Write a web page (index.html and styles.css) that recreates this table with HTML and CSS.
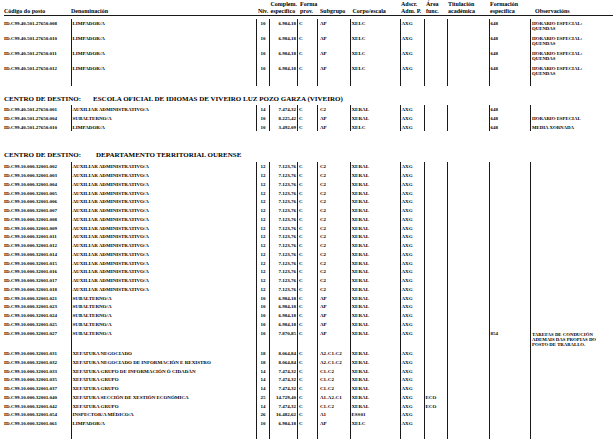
FILE: index.html
```html
<!DOCTYPE html>
<html lang="gl">
<head>
<meta charset="utf-8">
<title>RPT</title>
<link rel="stylesheet" href="styles.css">
</head>
<body>
<div class="page">
  <div class="row head">
    <div class="c">Código do posto</div>
    <div class="c">Denominación</div>
    <div class="c hniv">Niv.</div>
    <div class="c hcomp">Complem.<br>específico</div>
    <div class="c hforma">Forma<br>prov.</div>
    <div class="c hsub">Subgrupo</div>
    <div class="c hcorpo">Corpo/escala</div>
    <div class="c hads">Adscr.<br>Adm. P.</div>
    <div class="c harea">Área<br>func.</div>
    <div class="c htit">Titulación<br>académica</div>
    <div class="c hform">Formación<br>específica</div>
    <div class="c hobs">Observacións</div>
  </div>

  <div class="group g1">
    <div class="row tall2"><div class="c">ID.C99.40.501.27650.008</div><div class="c den">LIMPADOR/A</div><div class="c niv">10</div><div class="c comp">6.984,18</div><div class="c fp">C</div><div class="c sub">AP</div><div class="c t">XELC</div><div class="c t">AXG</div><div class="c t"></div><div class="c t"></div><div class="c t">648</div><div class="c obs">HORARIO ESPECIAL:<br>QUENDAS</div></div>
    <div class="row tall2"><div class="c">ID.C99.40.501.27650.010</div><div class="c den">LIMPADOR/A</div><div class="c niv">10</div><div class="c comp">6.984,18</div><div class="c fp">C</div><div class="c sub">AP</div><div class="c t">XELC</div><div class="c t">AXG</div><div class="c t"></div><div class="c t"></div><div class="c t">648</div><div class="c obs">HORARIO ESPECIAL:<br>QUENDAS</div></div>
    <div class="row tall2"><div class="c">ID.C99.40.501.27650.011</div><div class="c den">LIMPADOR/A</div><div class="c niv">10</div><div class="c comp">6.984,18</div><div class="c fp">C</div><div class="c sub">AP</div><div class="c t">XELC</div><div class="c t">AXG</div><div class="c t"></div><div class="c t"></div><div class="c t">648</div><div class="c obs">HORARIO ESPECIAL:<br>QUENDAS</div></div>
    <div class="row tall2"><div class="c">ID.C99.40.501.27650.012</div><div class="c den">LIMPADOR/A</div><div class="c niv">10</div><div class="c comp">6.984,18</div><div class="c fp">C</div><div class="c sub">AP</div><div class="c t">XELC</div><div class="c t">AXG</div><div class="c t"></div><div class="c t"></div><div class="c t">648</div><div class="c obs">HORARIO ESPECIAL:<br>QUENDAS</div></div>
    <div class="row spacer1"></div>
  </div>

  <h2 class="center h-a"><span class="lbl">CENTRO DE DESTINO:</span>ESCOLA OFICIAL DE IDIOMAS DE VIVEIRO LUZ POZO GARZA (VIVEIRO)</h2>

  <div class="group">
    <div class="row"><div class="c">ID.C99.40.501.27650.001</div><div class="c den">AUXILIAR ADMINISTRATIVO/A</div><div class="c niv">14</div><div class="c comp">7.474,32</div><div class="c fp">C</div><div class="c sub">C2</div><div class="c t">XERAL</div><div class="c t">AXG</div><div class="c t"></div><div class="c t"></div><div class="c t">648</div><div class="c obs"></div></div>
    <div class="row"><div class="c">ID.C99.40.501.27650.004</div><div class="c den">SUBALTERNO/A</div><div class="c niv">10</div><div class="c comp">8.225,42</div><div class="c fp">C</div><div class="c sub">AP</div><div class="c t">XERAL</div><div class="c t">AXG</div><div class="c t"></div><div class="c t"></div><div class="c t">648</div><div class="c obs">HORARIO ESPECIAL</div></div>
    <div class="row"><div class="c">ID.C99.40.501.27650.010</div><div class="c den">LIMPADOR/A</div><div class="c niv">10</div><div class="c comp">3.492,09</div><div class="c fp">C</div><div class="c sub">AP</div><div class="c t">XELC</div><div class="c t">AXG</div><div class="c t"></div><div class="c t"></div><div class="c t">648</div><div class="c obs">MEDIA XORNADA</div></div>
  </div>

  <h2 class="center h-b"><span class="lbl lbl-b">CENTRO DE DESTINO:</span>DEPARTAMENTO TERRITORIAL OURENSE</h2>

  <div class="group g3">
    <div class="row"><div class="c">ID.C99.10.000.32001.002</div><div class="c den">AUXILIAR ADMINISTRATIVO/A</div><div class="c niv">12</div><div class="c comp">7.123,76</div><div class="c fp">C</div><div class="c sub">C2</div><div class="c t">XERAL</div><div class="c t">AXG</div><div class="c t"></div><div class="c t"></div><div class="c t"></div><div class="c obs"></div></div>
    <div class="row"><div class="c">ID.C99.10.000.32001.003</div><div class="c den">AUXILIAR ADMINISTRATIVO/A</div><div class="c niv">12</div><div class="c comp">7.123,76</div><div class="c fp">C</div><div class="c sub">C2</div><div class="c t">XERAL</div><div class="c t">AXG</div><div class="c t"></div><div class="c t"></div><div class="c t"></div><div class="c obs"></div></div>
    <div class="row"><div class="c">ID.C99.10.000.32001.004</div><div class="c den">AUXILIAR ADMINISTRATIVO/A</div><div class="c niv">12</div><div class="c comp">7.123,76</div><div class="c fp">C</div><div class="c sub">C2</div><div class="c t">XERAL</div><div class="c t">AXG</div><div class="c t"></div><div class="c t"></div><div class="c t"></div><div class="c obs"></div></div>
    <div class="row"><div class="c">ID.C99.10.000.32001.005</div><div class="c den">AUXILIAR ADMINISTRATIVO/A</div><div class="c niv">12</div><div class="c comp">7.123,76</div><div class="c fp">C</div><div class="c sub">C2</div><div class="c t">XERAL</div><div class="c t">AXG</div><div class="c t"></div><div class="c t"></div><div class="c t"></div><div class="c obs"></div></div>
    <div class="row"><div class="c">ID.C99.10.000.32001.006</div><div class="c den">AUXILIAR ADMINISTRATIVO/A</div><div class="c niv">12</div><div class="c comp">7.123,76</div><div class="c fp">C</div><div class="c sub">C2</div><div class="c t">XERAL</div><div class="c t">AXG</div><div class="c t"></div><div class="c t"></div><div class="c t"></div><div class="c obs"></div></div>
    <div class="row"><div class="c">ID.C99.10.000.32001.007</div><div class="c den">AUXILIAR ADMINISTRATIVO/A</div><div class="c niv">12</div><div class="c comp">7.123,76</div><div class="c fp">C</div><div class="c sub">C2</div><div class="c t">XERAL</div><div class="c t">AXG</div><div class="c t"></div><div class="c t"></div><div class="c t"></div><div class="c obs"></div></div>
    <div class="row"><div class="c">ID.C99.10.000.32001.008</div><div class="c den">AUXILIAR ADMINISTRATIVO/A</div><div class="c niv">12</div><div class="c comp">7.123,76</div><div class="c fp">C</div><div class="c sub">C2</div><div class="c t">XERAL</div><div class="c t">AXG</div><div class="c t"></div><div class="c t"></div><div class="c t"></div><div class="c obs"></div></div>
    <div class="row"><div class="c">ID.C99.10.000.32001.009</div><div class="c den">AUXILIAR ADMINISTRATIVO/A</div><div class="c niv">12</div><div class="c comp">7.123,76</div><div class="c fp">C</div><div class="c sub">C2</div><div class="c t">XERAL</div><div class="c t">AXG</div><div class="c t"></div><div class="c t"></div><div class="c t"></div><div class="c obs"></div></div>
    <div class="row"><div class="c">ID.C99.10.000.32001.011</div><div class="c den">AUXILIAR ADMINISTRATIVO/A</div><div class="c niv">12</div><div class="c comp">7.123,76</div><div class="c fp">C</div><div class="c sub">C2</div><div class="c t">XERAL</div><div class="c t">AXG</div><div class="c t"></div><div class="c t"></div><div class="c t"></div><div class="c obs"></div></div>
    <div class="row"><div class="c">ID.C99.10.000.32001.012</div><div class="c den">AUXILIAR ADMINISTRATIVO/A</div><div class="c niv">12</div><div class="c comp">7.123,76</div><div class="c fp">C</div><div class="c sub">C2</div><div class="c t">XERAL</div><div class="c t">AXG</div><div class="c t"></div><div class="c t"></div><div class="c t"></div><div class="c obs"></div></div>
    <div class="row"><div class="c">ID.C99.10.000.32001.014</div><div class="c den">AUXILIAR ADMINISTRATIVO/A</div><div class="c niv">12</div><div class="c comp">7.123,76</div><div class="c fp">C</div><div class="c sub">C2</div><div class="c t">XERAL</div><div class="c t">AXG</div><div class="c t"></div><div class="c t"></div><div class="c t"></div><div class="c obs"></div></div>
    <div class="row"><div class="c">ID.C99.10.000.32001.015</div><div class="c den">AUXILIAR ADMINISTRATIVO/A</div><div class="c niv">12</div><div class="c comp">7.123,76</div><div class="c fp">C</div><div class="c sub">C2</div><div class="c t">XERAL</div><div class="c t">AXG</div><div class="c t"></div><div class="c t"></div><div class="c t"></div><div class="c obs"></div></div>
    <div class="row"><div class="c">ID.C99.10.000.32001.016</div><div class="c den">AUXILIAR ADMINISTRATIVO/A</div><div class="c niv">12</div><div class="c comp">7.123,76</div><div class="c fp">C</div><div class="c sub">C2</div><div class="c t">XERAL</div><div class="c t">AXG</div><div class="c t"></div><div class="c t"></div><div class="c t"></div><div class="c obs"></div></div>
    <div class="row"><div class="c">ID.C99.10.000.32001.017</div><div class="c den">AUXILIAR ADMINISTRATIVO/A</div><div class="c niv">12</div><div class="c comp">7.123,76</div><div class="c fp">C</div><div class="c sub">C2</div><div class="c t">XERAL</div><div class="c t">AXG</div><div class="c t"></div><div class="c t"></div><div class="c t"></div><div class="c obs"></div></div>
    <div class="row"><div class="c">ID.C99.10.000.32001.018</div><div class="c den">AUXILIAR ADMINISTRATIVO/A</div><div class="c niv">12</div><div class="c comp">7.123,76</div><div class="c fp">C</div><div class="c sub">C2</div><div class="c t">XERAL</div><div class="c t">AXG</div><div class="c t"></div><div class="c t"></div><div class="c t"></div><div class="c obs"></div></div>
    <div class="row"><div class="c">ID.C99.10.000.32001.021</div><div class="c den">SUBALTERNO/A</div><div class="c niv">10</div><div class="c comp">6.984,18</div><div class="c fp">C</div><div class="c sub">AP</div><div class="c t">XERAL</div><div class="c t">AXG</div><div class="c t"></div><div class="c t"></div><div class="c t"></div><div class="c obs"></div></div>
    <div class="row"><div class="c">ID.C99.10.000.32001.023</div><div class="c den">SUBALTERNO/A</div><div class="c niv">10</div><div class="c comp">6.984,18</div><div class="c fp">C</div><div class="c sub">AP</div><div class="c t">XERAL</div><div class="c t">AXG</div><div class="c t"></div><div class="c t"></div><div class="c t"></div><div class="c obs"></div></div>
    <div class="row"><div class="c">ID.C99.10.000.32001.024</div><div class="c den">SUBALTERNO/A</div><div class="c niv">10</div><div class="c comp">6.984,18</div><div class="c fp">C</div><div class="c sub">AP</div><div class="c t">XERAL</div><div class="c t">AXG</div><div class="c t"></div><div class="c t"></div><div class="c t"></div><div class="c obs"></div></div>
    <div class="row"><div class="c">ID.C99.10.000.32001.025</div><div class="c den">SUBALTERNO/A</div><div class="c niv">10</div><div class="c comp">6.984,18</div><div class="c fp">C</div><div class="c sub">AP</div><div class="c t">XERAL</div><div class="c t">AXG</div><div class="c t"></div><div class="c t"></div><div class="c t"></div><div class="c obs"></div></div>
    <div class="row tall3"><div class="c">ID.C99.10.000.32001.027</div><div class="c den">SUBALTERNO/A</div><div class="c niv">10</div><div class="c comp">7.870,85</div><div class="c fp">C</div><div class="c sub">AP</div><div class="c t">XERAL</div><div class="c t">AXG</div><div class="c t"></div><div class="c t"></div><div class="c t">854</div><div class="c obs obs3">TAREFAS DE CONDUCIÓN<br>ADEMAIS DAS PROPIAS DO<br>POSTO DE TRABALLO.</div></div>
    <div class="row"><div class="c">ID.C99.10.000.32001.031</div><div class="c den">XEFATURA NEGOCIADO</div><div class="c niv">18</div><div class="c comp">8.064,84</div><div class="c fp">C</div><div class="c sub">A2-C1-C2</div><div class="c t">XERAL</div><div class="c t">AXG</div><div class="c t"></div><div class="c t"></div><div class="c t"></div><div class="c obs"></div></div>
    <div class="row"><div class="c">ID.C99.10.000.32001.032</div><div class="c den">XEFATURA NEGOCIADO DE INFORMACIÓN E REXISTRO</div><div class="c niv">18</div><div class="c comp">8.064,84</div><div class="c fp">C</div><div class="c sub">A2-C1-C2</div><div class="c t">XERAL</div><div class="c t">AXG</div><div class="c t"></div><div class="c t"></div><div class="c t"></div><div class="c obs"></div></div>
    <div class="row"><div class="c">ID.C99.10.000.32001.033</div><div class="c den">XEFATURA GRUPO DE INFORMACIÓN Ó CIDADÁN</div><div class="c niv">14</div><div class="c comp">7.474,32</div><div class="c fp">C</div><div class="c sub">C1-C2</div><div class="c t">XERAL</div><div class="c t">AXG</div><div class="c t"></div><div class="c t"></div><div class="c t"></div><div class="c obs"></div></div>
    <div class="row"><div class="c">ID.C99.10.000.32001.035</div><div class="c den">XEFATURA GRUPO</div><div class="c niv">14</div><div class="c comp">7.474,32</div><div class="c fp">C</div><div class="c sub">C1-C2</div><div class="c t">XERAL</div><div class="c t">AXG</div><div class="c t"></div><div class="c t"></div><div class="c t"></div><div class="c obs"></div></div>
    <div class="row"><div class="c">ID.C99.10.000.32001.037</div><div class="c den">XEFATURA GRUPO</div><div class="c niv">14</div><div class="c comp">7.474,32</div><div class="c fp">C</div><div class="c sub">C1-C2</div><div class="c t">XERAL</div><div class="c t">AXG</div><div class="c t"></div><div class="c t"></div><div class="c t"></div><div class="c obs"></div></div>
    <div class="row"><div class="c">ID.C99.10.000.32001.040</div><div class="c den">XEFATURA SECCIÓN DE XESTIÓN ECONÓMICA</div><div class="c niv">25</div><div class="c comp">14.729,40</div><div class="c fp">C</div><div class="c sub">A1-A2-C1</div><div class="c t">XERAL</div><div class="c t">AXG</div><div class="c t">ECO</div><div class="c t"></div><div class="c t"></div><div class="c obs"></div></div>
    <div class="row"><div class="c">ID.C99.10.000.32001.042</div><div class="c den">XEFATURA GRUPO</div><div class="c niv">14</div><div class="c comp">7.474,32</div><div class="c fp">C</div><div class="c sub">C1-C2</div><div class="c t">XERAL</div><div class="c t">AXG</div><div class="c t">ECO</div><div class="c t"></div><div class="c t"></div><div class="c obs"></div></div>
    <div class="row"><div class="c">ID.C99.10.000.32001.054</div><div class="c den">INSPECTOR/A MÉDICO/A</div><div class="c niv">26</div><div class="c comp">16.482,62</div><div class="c fp">C</div><div class="c sub">A1</div><div class="c t">ESS01</div><div class="c t">AXG</div><div class="c t"></div><div class="c t"></div><div class="c t"></div><div class="c obs"></div></div>
    <div class="row"><div class="c">ID.C99.10.000.32001.061</div><div class="c den">LIMPADOR/A</div><div class="c niv">10</div><div class="c comp">6.984,18</div><div class="c fp">C</div><div class="c sub">AP</div><div class="c t">XELC</div><div class="c t">AXG</div><div class="c t"></div><div class="c t"></div><div class="c t"></div><div class="c obs"></div></div>
    <div class="row spacer3"></div>
  </div>
</div>
</body>
</html>
```

FILE: styles.css
```css
html, body {
  margin: 0;
  padding: 0;
  background: #fff;
}

body {
  font-family: "Liberation Serif", "Times New Roman", serif;
  font-weight: bold;
  color: #000;
  overflow: hidden;
}

.page {
  padding: 0 2px 0 4px;
}

/* vertical column rules drawn on each group block */
.group {
  --rule: linear-gradient(#1a1a1a, #1a1a1a);
  background-image: var(--rule), var(--rule), var(--rule), var(--rule), var(--rule), var(--rule),
                    var(--rule), var(--rule), var(--rule), var(--rule), var(--rule);
  background-size: 1px 100%;
  background-repeat: no-repeat;
  background-position: 67px 0, 252px 0, 265px 0, 293px 0, 313px 0, 346px 0,
                       396px 0, 420px 0, 443px 0, 485px 0, 526px 0;
}

.row {
  display: grid;
  grid-template-columns: 67px 185px 13px 28px 20px 33px 50px 24px 23px 42px 41px 1fr;
  height: 8.75px;
  font-size: 5px;
  line-height: 5px;
  white-space: nowrap;
}

.g1 .row.tall2 { height: 15px; }
.g3 .row.tall3 { height: 20.5px; }
.row.spacer1 { height: 7px; }
.row.spacer3 { height: 14px; }

.c {
  padding-top: 2px;
}

.den { padding-left: 1.5px; }
.niv { text-align: center; padding-left: 1px; }
.comp { text-align: right; padding-right: 1px; }
.fp { padding-left: 2px; }
.sub { padding-left: 3px; }
.t { padding-left: 1.5px; }
.obs { padding-left: 2px; font-size: 4.8px; }
.obs3 { padding-top: 3.5px; line-height: 5.2px; }

/* header */
.row.head {
  height: 15px;
  font-size: 6px;
  line-height: 6.5px;
  align-items: end;
  border-bottom: 1px solid #1a1a1a;
  margin-bottom: 3px;
}
.head .c { padding-top: 0; padding-bottom: 1px; }
.hniv { padding-left: 2px; }
.hcomp { padding-left: 1.5px; }
.hforma { padding-left: 3px; }
.hsub { padding-left: 3px; }
.hcorpo { padding-left: 2.5px; }
.hads { padding-left: 1px; }
.harea { padding-left: 2px; }
.htit { padding-left: 1px; }
.hform { padding-left: 1px; }
.hobs { padding-left: 5px; }

/* section headings */
.center {
  margin: 0;
  font-size: 7px;
  line-height: 8px;
  font-weight: bold;
  white-space: nowrap;
}
.center .lbl { margin-right: 12px; }
.center .lbl-b { margin-right: 15px; }
.h-a { margin-top: 9px; margin-bottom: 2px; }
.h-b { margin-top: 20px; margin-bottom: 3px; }
```
